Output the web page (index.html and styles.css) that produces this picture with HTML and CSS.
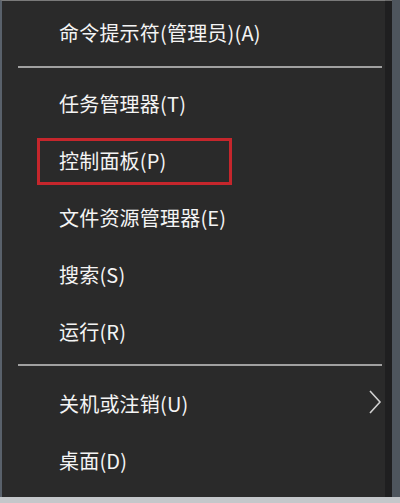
FILE: index.html
```html
<!DOCTYPE html>
<html lang="zh-CN">
<head>
    <meta charset="UTF-8">
    <meta name="viewport" content="width=device-width, initial-scale=1.0">
    <title>快速链接菜单</title>
    <link rel="stylesheet" href="styles.css">
</head>
<body>
    <div class="screen">
        <div class="menu">
            <div class="item first">命令提示符(管理员)(A)</div>
            <div class="separator top-sep"></div>
            <div class="item">任务管理器(T)</div>
            <div class="item marked">
                控制面板(P)
                <span class="highlight"></span>
            </div>
            <div class="item">文件资源管理器(E)</div>
            <div class="item">搜索(S)</div>
            <div class="item">运行(R)</div>
            <div class="separator bottom-sep"></div>
            <div class="item has-sub">
                <span>关机或注销(U)</span>
                <svg class="chevron" width="14" height="24" viewBox="0 0 14 24">
                    <polyline points="2,1 12,12 2,23" fill="none" stroke="#d0d0d0" stroke-width="1.6"/>
                </svg>
            </div>
            <div class="item">桌面(D)</div>
        </div>
        <div class="shade"></div>
        <div class="edge"></div>
    </div>
</body>
</html>
```

FILE: styles.css
```css
html, body {
    margin: 0;
    padding: 0;
}
body {
    width: 400px;
    height: 503px;
    background: #c4c7ca;
    font-family: "Noto Sans CJK SC", "Microsoft YaHei", sans-serif;
    overflow: hidden;
}
.screen {
    display: flex;
    height: 497px;
}
.menu {
    flex: none;
    width: 385px;
    background: #2a2a2a;
    border-left: 2px solid #59616b;
    border-top: 1px solid #7a7a7a;
    padding-top: 3px;
    box-sizing: border-box;
}
.shade {
    width: 7px;
    background: #1f1f20;
    border-top: 1px solid #6a6a6a;
}
.edge {
    width: 8px;
    background: #4e555d;
}
.item {
    position: relative;
    height: 57px;
    display: flex;
    align-items: center;
    padding-left: 57px;
    padding-right: 3px;
    color: #f4f4f4;
    font-size: 20px;
    letter-spacing: 0.2px;
}
.has-sub {
    justify-content: space-between;
}
.chevron {
    display: block;
    margin-top: -4px;
}
.separator {
    height: 2px;
    background: #a0a0a0;
    margin-left: 16px;
    margin-right: 3px;
}
.top-sep {
    margin-top: 5px;
    margin-bottom: 7px;
}
.bottom-sep {
    margin-top: 4px;
    margin-bottom: 9px;
}
.highlight {
    position: absolute;
    left: 35px;
    top: 6px;
    width: 195px;
    height: 47px;
    border: 3px solid #c5262c;
    box-sizing: border-box;
}
```
